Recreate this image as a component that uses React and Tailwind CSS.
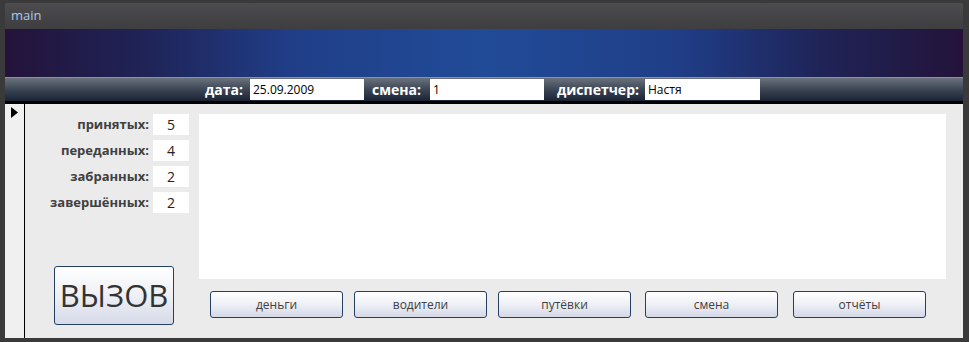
import React from 'react'

const counters = [
  { label: 'принятых:', value: '5' },
  { label: 'переданных:', value: '4' },
  { label: 'забранных:', value: '2' },
  { label: 'завершённых:', value: '2' },
]

const buttons = [
  { name: 'деньги', cls: 'ml-[11px]' },
  { name: 'водители', cls: 'ml-[11px]' },
  { name: 'путёвки', cls: 'ml-[11px]' },
  { name: 'смена', cls: 'ml-[14px]' },
  { name: 'отчёты', cls: 'ml-[15px]' },
]

const font = { fontFamily: '"Open Sans", "Noto Sans", sans-serif' }

const App = () => {
  return (
    <div
      className="w-[969px] h-[342px] bg-[#3a3a3a] pl-[5px] pr-[6px] pt-[3px] pb-[4px] flex flex-col overflow-hidden"
      style={font}
    >
      {/* title bar */}
      <div className="h-[26px] flex items-center pl-[6px] bg-[linear-gradient(to_bottom,#4c4c4e,#3e3e40)] text-[13px] text-[#a9c8ec]">
        main
      </div>

      {/* blue band */}
      <div className="h-[48px] bg-[linear-gradient(to_right,#23133a,#1f2458_15%,#203e88_30%,#214b97_50%,#203e88_70%,#1f2458_85%,#23133a)]" />

      {/* header */}
      <div className="h-[24px] flex items-center border-t border-[#8a929c] bg-[linear-gradient(to_bottom,#6a727c,#3b4655_50%,#1a2333)]">
        <span className="w-[238px] text-right text-[14px] font-bold text-white">дата:</span>
        <div className="ml-[7px] w-[114px] h-[21px] bg-white text-[12px] text-black pl-[3px] leading-[21px]">25.09.2009</div>
        <span className="w-[57px] text-right text-[14px] font-bold text-white">смена:</span>
        <div className="ml-[9px] w-[114px] h-[21px] bg-white text-[12px] text-black pl-[3px] leading-[21px]">1</div>
        <span className="w-[95px] text-right text-[14px] font-bold text-white">диспетчер:</span>
        <div className="ml-[6px] w-[115px] h-[21px] bg-white text-[12px] text-black pl-[3px] leading-[21px]">Настя</div>
      </div>
      <div className="h-[3px] bg-black" />

      {/* body */}
      <div className="flex-1 flex bg-[#ebebeb]">
        <div className="w-[20px] bg-[#f0f0f0] border-r border-black flex justify-center pt-[3px]">
          <svg width="7" height="11" viewBox="0 0 7 11">
            <path d="M0 0 L7 5.5 L0 11 Z" fill="#000" />
          </svg>
        </div>

        <div className="w-[174px] flex flex-col pt-[10px]">
          <div className="flex flex-col gap-[5px]">
            {counters.map((c) => (
              <div key={c.label} className="flex items-center">
                <span className="w-[124px] text-right text-[13px] font-bold text-[#404040]">{c.label}</span>
                <div className="ml-[4px] w-[36px] h-[21px] bg-white text-center text-[14px] leading-[21px] text-[#222]">
                  {c.value}
                </div>
              </div>
            ))}
          </div>
          <button className="mt-auto mb-[13px] ml-[29px] w-[120px] h-[59px] rounded-[3px] border border-[#243f66] bg-[linear-gradient(to_bottom,#ffffff,#eef0f6_50%,#d6dae8)] text-[31px] text-[#333] leading-none">
            ВЫЗОВ
          </button>
        </div>

        <div className="w-[747px] flex flex-col pt-[10px]">
          <div className="h-[165px] bg-white" />
          <div className="mt-[12px] flex">
            {buttons.map((b) => (
              <button
                key={b.name}
                className={`${b.cls} w-[133px] h-[27px] rounded-[3px] border border-[#243f66] bg-[linear-gradient(to_bottom,#ffffff,#eef0f6_50%,#d4d8e6)] text-[12px] text-[#404040]`}
              >
                {b.name}
              </button>
            ))}
          </div>
        </div>
      </div>
    </div>
  )
}

export default App
